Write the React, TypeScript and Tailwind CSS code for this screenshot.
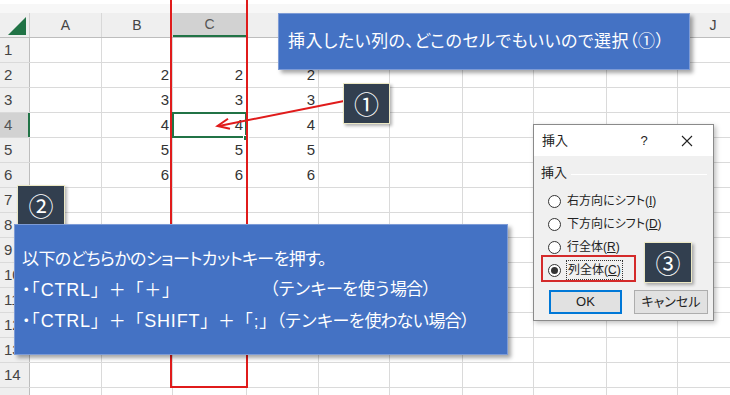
import React from "react";

const cols = [
  { l: "A", w: "w-[72px]" },
  { l: "B", w: "w-[71px]" },
  { l: "C", w: "w-[74px]" },
  { l: "D", w: "w-[72px]" },
  { l: "E", w: "w-[71px]" },
  { l: "F", w: "w-[73px]" },
  { l: "G", w: "w-[71px]" },
  { l: "H", w: "w-[73px]" },
  { l: "I", w: "w-[71px]" },
  { l: "J", w: "w-[71px]" },
];

const rows = Array.from({ length: 15 }, (_, i) => i + 1);

const jp = "font-['Liberation_Sans','Noto_Sans_CJK_JP',sans-serif]";
const palt = "[font-feature-settings:'palt']";

function Callout({ n, className }: { n: string; className: string }) {
  return (
    <div
      className={`absolute flex items-center justify-center bg-[#323f4f] border border-[#ece8c4] shadow-[2px_2px_3px_rgba(0,0,0,0.3)] text-white text-[25px] leading-none font-['Noto_Sans_CJK_JP',sans-serif] ${className}`}
    >
      {n}
    </div>
  );
}

function Radio({ on, label, u }: { on?: boolean; label: string; u: string }) {
  return (
    <div className="flex items-center h-[22px] gap-[6px] pl-[14px]">
      <span className="w-[13px] h-[13px] rounded-full border border-[#333] bg-white flex items-center justify-center">
        {on && <span className="w-[7px] h-[7px] rounded-full bg-[#333]" />}
      </span>
      <span className={on ? "outline outline-1 outline-dotted outline-[#333] outline-offset-0 px-px" : ""}>
        {label}(<span className="underline">{u}</span>)
      </span>
    </div>
  );
}

export default function App() {
  return (
    <div className="relative w-[730px] h-[395px] overflow-hidden bg-white font-['Liberation_Sans',sans-serif] text-[#333]">
      {/* sheet */}
      <div className="h-[13px] bg-[#f7f7f7] border-t-4 border-white" />
      <div className="flex h-[25px] bg-[#efefef] border-b border-[#bdbdbd] w-[800px]">
        <div className="w-[30px] shrink-0 border-r border-[#d0d0d0] relative">
          <svg className="absolute left-[8px] top-[4px]" width="18" height="18" viewBox="0 0 18 18">
            <polygon points="18,0 18,18 0,18" fill="#217346" />
          </svg>
        </div>
        {cols.map((c) => (
          <div
            key={c.l}
            className={`${c.w} shrink-0 flex items-center justify-center text-[14px] border-r border-[#d8d8d8] ${
              c.l === "C" ? "bg-[#d2d2d2] border-b-2 border-b-[#217346] text-[#555]" : "text-[#444]"
            }`}
          >
            {c.l}
          </div>
        ))}
      </div>
      {rows.map((r) => (
        <div key={r} className="flex h-[25px] border-b border-[#dadada] w-[800px]">
          <div
            className={`w-[30px] shrink-0 flex items-center pl-[4px] text-[15px] ${
              r === 4 ? "bg-[#d2d2d2] border-r-2 border-[#217346] text-[#555]" : "bg-[#efefef] border-r border-[#bdbdbd] text-[#444]"
            }`}
          >
            {r}
          </div>
          {cols.map((c) => (
            <div
              key={c.l}
              className={`${c.w} shrink-0 relative flex items-center justify-end pr-[3px] text-[15px] text-[#333] border-r border-[#dadada]`}
            >
              {r >= 2 && r <= 6 && (c.l === "B" || c.l === "C" || c.l === "D") ? r : ""}
              {r === 4 && c.l === "C" && (
                <>
                  <div className="absolute -left-px -top-px -right-px -bottom-px border-2 border-[#217346]" />
                  <div className="absolute -right-[3px] -bottom-[4px] w-[6px] h-[6px] bg-[#217346] border border-white" />
                </>
              )}
            </div>
          ))}
        </div>
      ))}

      {/* red column frame */}
      <div className="absolute left-[170px] -top-[2px] w-[78px] h-[390px] border-2 border-[#e01b1b]" />

      {/* arrow */}
      <svg className="absolute left-0 top-0" width="730" height="395" viewBox="0 0 730 395">
        <line x1="344" y1="101" x2="219" y2="126" stroke="#e01b1b" strokeWidth="2" />
        <polyline points="228,118.8 217.5,126 230,128.8" fill="none" stroke="#e01b1b" strokeWidth="2" />
      </svg>

      {/* top tip */}
      <div
        className={`absolute left-[278px] top-[13px] w-[412px] h-[57px] bg-[#4472c4] border border-[#7d9bd6] shadow-[3px_3px_4px_rgba(0,0,0,0.35)] text-white text-[17px] tracking-[0.5px] flex items-center pl-[9px] ${jp} ${palt}`}
      >
        挿入したい列の、どこのセルでもいいので選択（①）
      </div>

      <Callout n="①" className="left-[343px] top-[83px] w-[47px] h-[41px]" />
      <Callout n="②" className="left-[17px] top-[185px] w-[48px] h-[41px]" />

      {/* bottom tip */}
      <div
        className={`absolute left-[14px] top-[224px] w-[494px] h-[131px] bg-[#4472c4] border border-[#7d9bd6] shadow-[3px_3px_4px_rgba(0,0,0,0.35)] text-white text-[17px] leading-[30px] pl-[7px] pt-[20px] ${jp}`}
      >
        <div className={`tracking-[-0.6px] ${palt}`}>以下のどちらかのショートカットキーを押す。</div>
        <div className="flex">
          <span className="w-[240px] tracking-[0.8px]">
            <span className={palt}>・</span>「<span className="text-[18px]">CTRL</span>」＋「＋」
          </span>
          <span className="tracking-[-1px]">（テンキーを使う場合）</span>
        </div>
        <div>
          <span className="tracking-[0.8px]">
            <span className={palt}>・</span>「<span className="text-[18px]">CTRL</span>」＋「<span className="text-[18px]">SHIFT</span>」＋「;」
          </span>
          <span className="tracking-[-1px]">（テンキーを使わない場合）</span>
        </div>
      </div>

      {/* dialog */}
      <div
        className={`absolute left-[533px] top-[124px] w-[181px] h-[197px] border border-[#8a8a8a] bg-[#f0f0f0] shadow-[2px_2px_5px_rgba(0,0,0,0.25)] text-[13px] text-[#222] ${jp} ${palt}`}
      >
        <div className="h-[31px] bg-white flex items-center pl-[8px]">
          <span className="flex-1">挿入</span>
          <span className="w-[18px] mr-[25px] text-center">?</span>
          <span className="w-[18px] mr-[17px] flex justify-center">
            <svg width="12" height="12" viewBox="0 0 12 12">
              <path d="M1 1 L11 11 M11 1 L1 11" stroke="#222" strokeWidth="1.1" />
            </svg>
          </span>
        </div>
        <div className="flex items-center gap-[4px] pl-[7px] pr-[6px] h-[34px]">
          <span>挿入</span>
          <span className="flex-1 h-px bg-[#d7d7d7] border-b border-white mt-[2px]" />
        </div>
        <div className="flex flex-col gap-[1px] text-[12px]">
          <Radio label="右方向にシフト" u="I" />
          <Radio label="下方向にシフト" u="D" />
          <Radio label="行全体" u="R" />
          <Radio on label="列全体" u="C" />
        </div>
        <div className="flex gap-[12px] pl-[15px] mt-[9px]">
          <div className="w-[73px] h-[24px] border-2 border-[#0078d7] bg-[#e1e1e1] flex items-center justify-center">OK</div>
          <div className="w-[74px] h-[24px] border border-[#adadad] bg-[#e1e1e1] flex items-center justify-center">キャンセル</div>
        </div>
      </div>

      {/* red frame on selected option */}
      <div className="absolute left-[541px] top-[255px] w-[95px] h-[27px] border-2 border-[#d42a2a]" />

      <Callout n="③" className="left-[644px] top-[242px] w-[48px] h-[41px]" />
    </div>
  );
}
